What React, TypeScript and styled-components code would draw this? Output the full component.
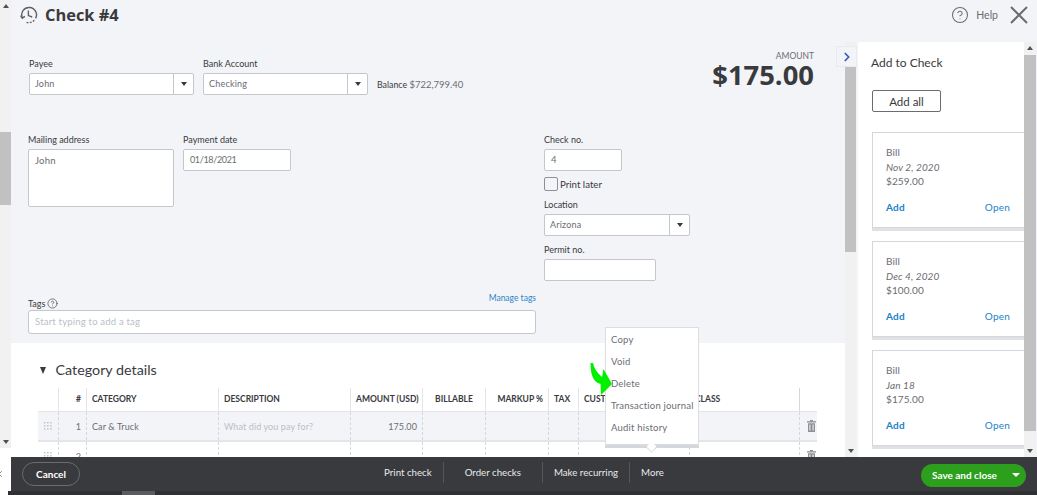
import React from "react";
import styled, { createGlobalStyle } from "styled-components";
import { ChevronRight, CircleHelp, X } from "lucide-react";

const GlobalStyle = createGlobalStyle`
  html, body {
    margin: 0;
    padding: 0;
    background: #ffffff;
  }
  body {
    font-family: "Lato", "Open Sans", sans-serif;
    color: #393a3d;
    overflow: hidden;
  }
  * {
    box-sizing: border-box;
  }
`;

const Page = styled.div`
  width: 1037px;
  height: 495px;
  display: flex;
  flex-direction: column;
  overflow: hidden;
`;

const MainRow = styled.div`
  height: 491px;
  display: flex;
`;

const LeftColumn = styled.div`
  width: 11px;
  flex: none;
  overflow: hidden;
  color: #6b6c72;
`;

const ClippedClose = styled.div`
  margin: 15px 0 0 -6px;
`;

const ScrollTrack = styled.div<{ $height?: number; $width: number }>`
  width: ${(p) => p.$width}px;
  height: ${(p) => (p.$height ? `${p.$height}px` : "100%")};
  flex: none;
  background: #f1f1f1;
  display: flex;
  flex-direction: column;
  align-items: stretch;
`;

const ScrollArrow = styled.div<{ $down?: boolean }>`
  height: 12px;
  flex: none;
  display: flex;
  align-items: center;
  justify-content: center;
  margin-top: ${(p) => (p.$down ? "auto" : "0")};
  &::after {
    content: "";
    border-left: 3.5px solid transparent;
    border-right: 3.5px solid transparent;
    ${(p) => (p.$down ? "border-top: 4px solid #505050;" : "border-bottom: 4px solid #505050;")}
  }
`;

const ScrollThumb = styled.div<{ $offset: number; $length: number }>`
  margin-top: ${(p) => p.$offset}px;
  height: ${(p) => p.$length}px;
  background: #c1c1c1;
`;

const Workspace = styled.div`
  flex: 1;
  min-width: 0;
  display: flex;
  flex-direction: column;
  background: #f3f4f8;
`;

const Header = styled.header`
  height: 42px;
  flex: none;
  display: flex;
  align-items: flex-start;
  padding: 6px 9px 0 9px;
`;

const Title = styled.h1`
  margin: 0 0 0 7px;
  font-size: 16.4px;
  line-height: 18px;
  font-weight: 700;
  font-family: "Open Sans", sans-serif;
  color: #393a3d;
`;

const HelpGroup = styled.div`
  margin-left: auto;
  display: flex;
  align-items: center;
  gap: 7px;
  color: #6b6c72;
  font-size: 10.5px;
`;

const CloseIcon = styled.svg`
  margin-left: 12px;
`;

const Content = styled.div`
  height: 415px;
  flex: none;
  display: flex;
  position: relative;
`;

const FormColumn = styled.main`
  width: 834px;
  flex: none;
  position: relative;
  overflow: hidden;
  background: #ffffff;
`;

const FormArea = styled.section`
  height: 301px;
  padding: 16px 31px 0 17px;
  background: #f3f4f8;
`;

const TopRow = styled.div`
  height: 76px;
  padding-left: 1px;
  display: flex;
  align-items: flex-start;
`;

const FieldGroup = styled.div<{ $width?: number }>`
  width: ${(p) => (p.$width ? `${p.$width}px` : "auto")};
  flex: none;
  display: flex;
  flex-direction: column;
`;

const Label = styled.label`
  display: block;
  height: 12px;
  margin-bottom: 3px;
  font-size: 9px;
  line-height: 12px;
  color: #393a3d;
`;

const SelectBox = styled.div<{ $width: number }>`
  width: ${(p) => p.$width}px;
  height: 22px;
  display: flex;
  background: #ffffff;
  border: 1px solid #c4c7cc;
  border-radius: 2px;
`;

const SelectValue = styled.div`
  flex: 1;
  padding-left: 5px;
  font-size: 9px;
  line-height: 20px;
  color: #6b6c72;
  letter-spacing: 0.2px;
`;

const SelectCaret = styled.div`
  width: 20px;
  flex: none;
  display: flex;
  align-items: center;
  justify-content: center;
  border-left: 1px solid #c4c7cc;
  &::after {
    content: "";
    border-left: 3.5px solid transparent;
    border-right: 3.5px solid transparent;
    border-top: 4px solid #393a3d;
  }
`;

const BalanceText = styled.div`
  margin: 21px 0 0 9px;
  font-size: 8.8px;
  line-height: 12px;
  color: #393a3d;
  white-space: nowrap;
  span {
    color: #6b6c72;
    font-size: 9.5px;
  }
`;

const AmountBlock = styled.div`
  margin: -7px 0 0 auto;
  text-align: right;
`;

const AmountLabel = styled.div`
  font-size: 8.5px;
  line-height: 10px;
  color: #6b6c72;
`;

const AmountValue = styled.div`
  font-family: "Open Sans", sans-serif;
  font-size: 27.4px;
  line-height: 28px;
  font-weight: 700;
  color: #393a3d;
`;

const DetailsRow = styled.div`
  height: 162px;
  display: flex;
  gap: 9px;
`;

const TextBox = styled.div<{ $width: number; $height?: number; $numeric?: boolean }>`
  width: ${(p) => p.$width}px;
  height: ${(p) => p.$height ?? 22}px;
  padding-left: 6px;
  font-size: ${(p) => (p.$numeric ? "9px" : "9.5px")};
  line-height: ${(p) => (p.$height ? "22px" : "20px")};
  letter-spacing: ${(p) => (p.$numeric ? "-0.35px" : "0.2px")};
  color: #6b6c72;
  background: #ffffff;
  border: 1px solid #c4c7cc;
  border-radius: 2px;
`;

const CheckColumn = styled(FieldGroup)`
  margin-left: 244px;
`;

const PrintLaterRow = styled.div`
  height: 14px;
  margin: 6px 0 8px;
  display: flex;
  align-items: center;
  gap: 2px;
  font-size: 9.7px;
  line-height: 12px;
  padding-bottom: 1px;
  color: #393a3d;
`;

const CheckSquare = styled.div`
  width: 14px;
  height: 14px;
  flex: none;
  margin-bottom: -1px;
  border: 1px solid #8d9096;
  border-radius: 2px;
  background: #f3f4f8;
`;

const StackedGroup = styled(FieldGroup)`
  margin-bottom: 8px;
`;

const TagsHead = styled.div`
  width: 508px;
  height: 14px;
  display: flex;
  justify-content: space-between;
  align-items: flex-start;
`;

const TagsLabel = styled.div`
  display: flex;
  align-items: center;
  gap: 2px;
  height: 14px;
  font-size: 9px;
  color: #393a3d;
`;

const ManageTags = styled.a`
  margin-top: -3px;
  font-size: 8.5px;
  line-height: 10px;
  color: #2b85c7;
`;

const TagsInput = styled.div`
  width: 508px;
  height: 24px;
  padding-left: 6px;
  font-size: 9.5px;
  line-height: 22px;
  letter-spacing: 0.2px;
  color: #babec5;
  background: #ffffff;
  border: 1px solid #c4c7cc;
  border-radius: 3px;
`;

const CategoryArea = styled.section`
  height: 114px;
  padding: 18px 0 0 27px;
  background: #ffffff;
`;

const CategoryHeading = styled.h2`
  height: 27px;
  margin: 0;
  display: flex;
  align-items: flex-start;
  gap: 9.5px;
  font-size: 14.3px;
  line-height: 18px;
  font-weight: 400;
  color: #393a3d;
  &::before {
    content: "";
    margin: 6px 0 0 2px;
    border-left: 3.5px solid transparent;
    border-right: 3.5px solid transparent;
    border-top: 7px solid #393a3d;
  }
`;

const gridColumns = "20px 28px 132px 132px 72px 63px 63px 30px 111px 110px 18px";

const TableHead = styled.div`
  width: 779px;
  height: 23px;
  display: grid;
  grid-template-columns: ${gridColumns};
`;

const HeadCell = styled.div<{ $align?: string }>`
  padding: 0 5px;
  font-size: 8.5px;
  font-weight: 700;
  line-height: 23px;
  color: #393a3d;
  white-space: nowrap;
  overflow: hidden;
  text-align: ${(p) => p.$align ?? "left"};
  border-left: 1px solid #e3e5e8;
  &:first-child,
  &:last-child {
    border-left: none;
  }
  &:nth-child(11) {
    border-left: 1px solid #d4d7dc;
  }
`;

const TableRow = styled.div<{ $shaded?: boolean }>`
  width: 779px;
  height: 30px;
  display: grid;
  grid-template-columns: ${gridColumns};
  background: ${(p) => (p.$shaded ? "#f3f4f8" : "#ffffff")};
  border-top: 1px solid #e3e5e8;
  border-bottom: 1px solid #e3e5e8;
`;

const RowCell = styled.div<{ $align?: string; $muted?: boolean }>`
  padding: 0 5px;
  display: flex;
  align-items: center;
  justify-content: ${(p) => p.$align ?? "flex-start"};
  font-size: 9px;
  letter-spacing: 0.1px;
  color: ${(p) => (p.$muted ? "#babec5" : "#6b6c72")};
  white-space: nowrap;
  border-left: 1px dashed #d4d7dc;
  &:first-child {
    border-left: none;
    padding: 0;
    justify-content: center;
  }
  &:last-child {
    padding: 0 0 0 5px;
    justify-content: center;
  }
`;

const PopupMenu = styled.div`
  position: absolute;
  left: 594px;
  top: 285px;
  width: 94px;
  height: 118px;
  padding-top: 1px;
  background: #ffffff;
  border: 1px solid #dcdee2;
  box-shadow: 0 3px 0 #d4d7dc;
  z-index: 2;
  &::after {
    content: "";
    position: absolute;
    left: 42px;
    bottom: -6px;
    width: 7px;
    height: 7px;
    background: #ffffff;
    transform: rotate(45deg);
    box-shadow: 1px 1px 0 #dcdee2;
  }
`;

const MenuItem = styled.div`
  height: 22px;
  padding-left: 5px;
  font-size: 9.5px;
  line-height: 22px;
  letter-spacing: 0.2px;
  color: #6b6c72;
  white-space: nowrap;
`;

const GreenArrow = styled.svg`
  position: absolute;
  left: 579px;
  top: 321px;
  z-index: 3;
`;

const PanelToggle = styled.div`
  position: absolute;
  left: 825px;
  top: 4px;
  width: 21px;
  height: 21px;
  display: flex;
  align-items: center;
  justify-content: center;
  background: #f3f4f8;
  border: 1px solid #e8eaee;
  color: #2d5fb8;
  z-index: 2;
`;

const SidePanel = styled.aside`
  width: 166px;
  flex: none;
  margin-left: 2px;
  padding: 13px 0 0 14px;
  background: #ffffff;
  overflow: hidden;
`;

const PanelTitle = styled.div`
  height: 16px;
  margin-left: -1px;
  font-size: 12px;
  line-height: 16px;
  color: #393a3d;
`;

const AddAllButton = styled.button`
  display: block;
  width: 69px;
  height: 22px;
  margin: 19px 0 20px;
  padding: 0;
  font: inherit;
  font-size: 11.5px;
  color: #393a3d;
  background: #ffffff;
  border: 1px solid #6b6c72;
  border-radius: 2px;
`;

const BillCard = styled.article`
  width: 152px;
  height: 96px;
  margin-bottom: 13px;
  padding: 12px 14px 0 13px;
  background: #ffffff;
  border: 1px solid #d4d7dc;
  border-right: none;
  box-shadow: 0 3px 0 #dfe1e5;
  font-size: 10px;
`;

const BillLine = styled.div<{ $italic?: boolean }>`
  height: 14.5px;
  line-height: 14.5px;
  font-style: ${(p) => (p.$italic ? "italic" : "normal")};
  color: #6b6c72;
  letter-spacing: 0.1px;
`;

const BillActions = styled.div`
  margin-top: 12px;
  display: flex;
  justify-content: space-between;
`;

const BillLink = styled.a<{ $strong?: boolean }>`
  color: #1a82c9;
  font-weight: ${(p) => (p.$strong ? 700 : 400)};
  letter-spacing: 0.2px;
`;

const Footer = styled.footer`
  height: 34px;
  flex: none;
  display: grid;
  grid-template-columns: 1fr auto 1fr;
  align-items: center;
  padding: 0 11px;
  background: #393a3d;
  color: #ffffff;
`;

const CancelButton = styled.button`
  width: 58px;
  height: 24px;
  padding: 0;
  font: inherit;
  font-size: 10px;
  font-weight: 700;
  color: #ffffff;
  background: transparent;
  border: 1px solid #6b6c72;
  border-radius: 12px;
`;

const FooterLinks = styled.nav`
  display: flex;
  align-items: center;
  margin-top: -3px;
`;

const FooterLink = styled.div<{ $wide?: boolean }>`
  height: 21px;
  padding: 0 ${(p) => (p.$wide ? 21 : 11)}px;
  font-size: 9.7px;
  line-height: 21px;
  color: #e8e9eb;
  border-left: 1px solid #55565a;
  &:first-child {
    border-left: none;
  }
`;

const SaveButton = styled.button`
  justify-self: end;
  width: 105px;
  height: 23px;
  margin-top: 2px;
  padding: 0 0 0 11px;
  display: flex;
  align-items: center;
  justify-content: space-between;
  font: inherit;
  font-size: 10px;
  font-weight: 700;
  color: #ffffff;
  background: #2ca01c;
  border: none;
  border-radius: 12px;
  &::after {
    content: "";
    margin-right: 6px;
    border-left: 4px solid transparent;
    border-right: 4px solid transparent;
    border-top: 4px solid #ffffff;
  }
`;

const BottomStrip = styled.div`
  height: 4px;
  flex: none;
  margin-left: 8px;
  background: #2f3033;
`;

const StripThumb = styled.div`
  width: 33px;
  height: 4px;
  margin-left: 114px;
  background: #5b5c60;
`;

const HistoryIcon = () => (
  <svg width="18" height="18" viewBox="0 0 18 18" fill="none" stroke="#5f6066" strokeWidth="1.4">
    <path d="M2.2 11.5A7.4 7.4 0 1 1 15.6 12.4" />
    <path d="M14.2 14.2A7.4 7.4 0 0 1 5.4 16" strokeDasharray="1.8 1.4" />
    <path d="M0.6 9.6l1.7 2.6 2.6-1.8" />
    <path d="M8.4 4.6v5l3.8 1.4" />
  </svg>
);

const GripDots = ({ color = "#babec5" }: { color?: string }) => (
  <svg width="8" height="8" viewBox="0 0 9 9" fill={color}>
    {[0, 3.5, 7].map((y) =>
      [0, 3.5, 7].map((x) => <rect key={`${x}-${y}`} x={x} y={y} width="1.6" height="1.6" />),
    )}
  </svg>
);

const TrashIcon = () => (
  <svg width="9" height="12" viewBox="0 0 9 12" fill="#8d9096">
    <rect x="0" y="1.2" width="9" height="1.3" />
    <rect x="3" y="0" width="3" height="1.3" />
    <path d="M1 3.2h7V12H1z M2.4 4.5v6h1v-6z M5.6 4.5v6h1v-6z" fillRule="evenodd" />
  </svg>
);

const columnTitles = ["", "#", "CATEGORY", "DESCRIPTION", "AMOUNT (USD)", "BILLABLE", "MARKUP %", "TAX", "CUSTOMER", "CLASS", ""];

const bills = [
  { date: "Nov 2, 2020", amount: "$259.00" },
  { date: "Dec 4, 2020", amount: "$100.00" },
  { date: "Jan 18", amount: "$175.00" },
];

const menuItems = ["Copy", "Void", "Delete", "Transaction journal", "Audit history"];

const headAlign = (i: number) => {
  if (i === 1 || i === 6) return "right";
  if (i === 4 || i === 5) return "center";
  return "left";
};

const App = () => {
  return (
    <Page>
      <GlobalStyle />
      <MainRow>
        <LeftColumn>
          <ScrollTrack $width={11} $height={448}>
            <ScrollArrow />
            <ScrollThumb $offset={120} $length={73} />
            <ScrollArrow $down />
          </ScrollTrack>
          <ClippedClose>
            <X size={10} />
          </ClippedClose>
        </LeftColumn>
        <Workspace>
          <Header>
            <HistoryIcon />
            <Title>Check #4</Title>
            <HelpGroup>
              <CircleHelp size={18} strokeWidth={1.4} />
              Help
            </HelpGroup>
            <CloseIcon width="18" height="18" viewBox="0 0 18 18" stroke="#6b6c72" strokeWidth="2">
              <path d="M1 1l16 16M17 1L1 17" />
            </CloseIcon>
          </Header>
          <Content>
            <FormColumn>
              <FormArea>
                <TopRow>
                  <FieldGroup $width={174}>
                    <Label>Payee</Label>
                    <SelectBox $width={165}>
                      <SelectValue>John</SelectValue>
                      <SelectCaret />
                    </SelectBox>
                  </FieldGroup>
                  <FieldGroup>
                    <Label>Bank Account</Label>
                    <SelectBox $width={165}>
                      <SelectValue>Checking</SelectValue>
                      <SelectCaret />
                    </SelectBox>
                  </FieldGroup>
                  <BalanceText>
                    Balance <span>$722,799.40</span>
                  </BalanceText>
                  <AmountBlock>
                    <AmountLabel>AMOUNT</AmountLabel>
                    <AmountValue>$175.00</AmountValue>
                  </AmountBlock>
                </TopRow>
                <DetailsRow>
                  <FieldGroup>
                    <Label>Mailing address</Label>
                    <TextBox $width={146} $height={58}>
                      John
                    </TextBox>
                  </FieldGroup>
                  <FieldGroup>
                    <Label>Payment date</Label>
                    <TextBox $width={108} $numeric>
                      01/18/2021
                    </TextBox>
                  </FieldGroup>
                  <CheckColumn>
                    <Label>Check no.</Label>
                    <TextBox $width={78}>4</TextBox>
                    <PrintLaterRow>
                      <CheckSquare />
                      Print later
                    </PrintLaterRow>
                    <StackedGroup>
                      <Label>Location</Label>
                      <SelectBox $width={146}>
                        <SelectValue>Arizona</SelectValue>
                        <SelectCaret />
                      </SelectBox>
                    </StackedGroup>
                    <Label>Permit no.</Label>
                    <TextBox $width={112} />
                  </CheckColumn>
                </DetailsRow>
                <TagsHead>
                  <TagsLabel>
                    Tags <CircleHelp size={11} strokeWidth={1.4} />
                  </TagsLabel>
                  <ManageTags>Manage tags</ManageTags>
                </TagsHead>
                <TagsInput>Start typing to add a tag</TagsInput>
              </FormArea>
              <CategoryArea>
                <CategoryHeading>Category details</CategoryHeading>
                <TableHead>
                  {columnTitles.map((title, i) => (
                    <HeadCell key={i} $align={headAlign(i)}>
                      {title}
                    </HeadCell>
                  ))}
                </TableHead>
                <TableRow $shaded>
                  <RowCell>
                    <GripDots />
                  </RowCell>
                  <RowCell $align="flex-end">1</RowCell>
                  <RowCell>Car &amp; Truck</RowCell>
                  <RowCell $muted>What did you pay for?</RowCell>
                  <RowCell $align="flex-end">175.00</RowCell>
                  <RowCell />
                  <RowCell />
                  <RowCell />
                  <RowCell />
                  <RowCell />
                  <RowCell>
                    <TrashIcon />
                  </RowCell>
                </TableRow>
                <TableRow>
                  <RowCell>
                    <GripDots />
                  </RowCell>
                  <RowCell $align="flex-end">2</RowCell>
                  <RowCell />
                  <RowCell />
                  <RowCell />
                  <RowCell />
                  <RowCell />
                  <RowCell />
                  <RowCell />
                  <RowCell />
                  <RowCell>
                    <TrashIcon />
                  </RowCell>
                </TableRow>
              </CategoryArea>
              <PopupMenu>
                {menuItems.map((item) => (
                  <MenuItem key={item}>{item}</MenuItem>
                ))}
              </PopupMenu>
              <GreenArrow width="23" height="33" viewBox="0 0 23 33">
                <path
                  fill="#00f000"
                  d="M0.5 0L3 0C4 5 7 10 12 14L13.5 6L22 21L11 32L10.5 21C3 19 0.5 11 0.5 0Z"
                />
              </GreenArrow>
            </FormColumn>
            <ScrollTrack $width={11}>
              <ScrollArrow />
              <ScrollThumb $offset={6} $length={192} />
              <ScrollArrow $down />
            </ScrollTrack>
            <PanelToggle>
              <ChevronRight size={14} strokeWidth={3} />
            </PanelToggle>
            <SidePanel>
              <PanelTitle>Add to Check</PanelTitle>
              <AddAllButton>Add all</AddAllButton>
              {bills.map((bill) => (
                <BillCard key={bill.date}>
                  <BillLine>Bill</BillLine>
                  <BillLine $italic>{bill.date}</BillLine>
                  <BillLine>{bill.amount}</BillLine>
                  <BillActions>
                    <BillLink $strong>Add</BillLink>
                    <BillLink>Open</BillLink>
                  </BillActions>
                </BillCard>
              ))}
            </SidePanel>
            <ScrollTrack $width={12}>
              <ScrollArrow />
              <ScrollThumb $offset={1} $length={376} />
              <ScrollArrow $down />
            </ScrollTrack>
          </Content>
          <Footer>
            <CancelButton>Cancel</CancelButton>
            <FooterLinks>
              <FooterLink>Print check</FooterLink>
              <FooterLink $wide>Order checks</FooterLink>
              <FooterLink>Make recurring</FooterLink>
              <FooterLink>More</FooterLink>
            </FooterLinks>
            <SaveButton>Save and close</SaveButton>
          </Footer>
        </Workspace>
      </MainRow>
      <BottomStrip>
        <StripThumb />
      </BottomStrip>
    </Page>
  );
};

export default App;
